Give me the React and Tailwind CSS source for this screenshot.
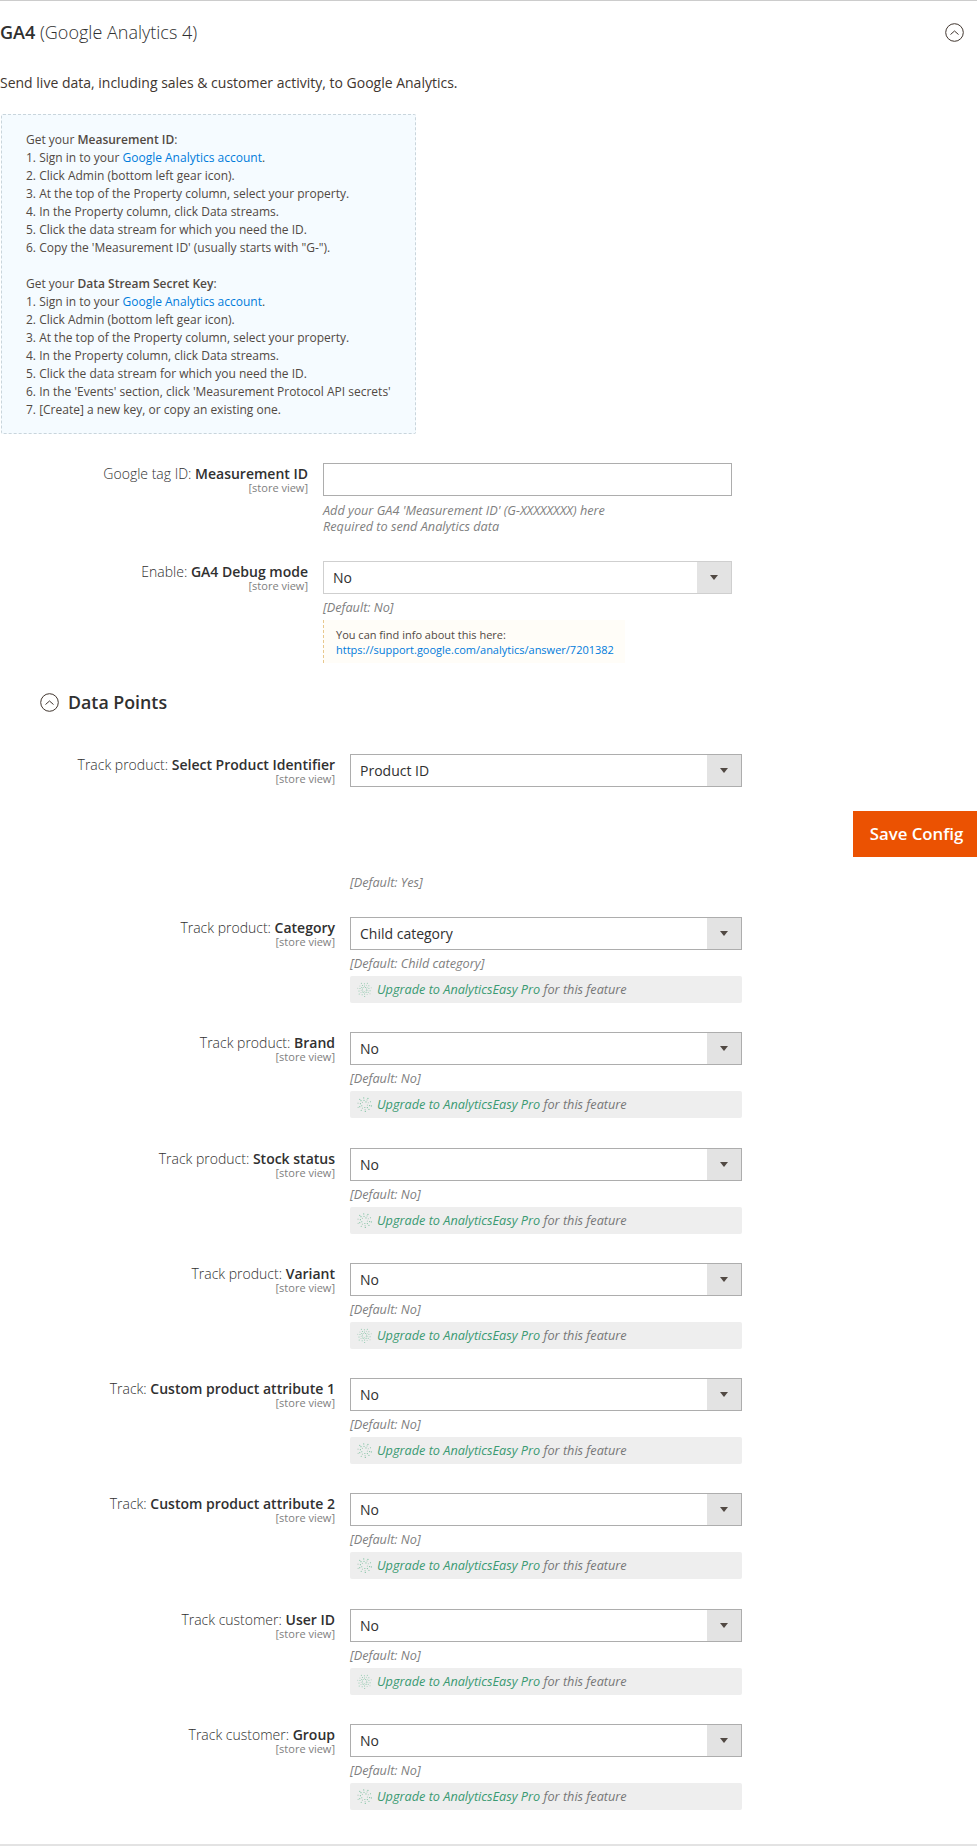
function Burst({ dense }) {
  const n = dense ? 14 : 10;
  const dots = [];
  for (let i = 0; i < n; i++) {
    const a = (i / n) * Math.PI * 2 + 0.2;
    const radii = dense ? (i % 2 ? [2.2, 4.6, 6.9] : [3.4, 5.7]) : i % 2 ? [4.2, 6.6] : [3, 5.2, 7];
    radii.forEach((r, j) => {
      dots.push(
        <circle key={`${i}-${j}`} cx={7.5 + Math.cos(a) * r} cy={7.5 + Math.sin(a) * r} r={dense ? 0.5 : 0.6} fill={(i + j) % 3 ? "#7cc2a1" : "#b0cbbd"} />
      );
    });
  }
  return <svg width="15" height="15" viewBox="0 0 15 15" className="shrink-0">{dots}</svg>;
}

function Chevron() {
  return (
    <svg width="19" height="19" viewBox="0 0 19 19" fill="none" className="shrink-0">
      <circle cx="9.5" cy="9.5" r="8.8" stroke="#41362f" strokeWidth="1" />
      <path d="M5.5 11.5 L9.5 8 L13.5 11.5" stroke="#41362f" strokeWidth="1" />
    </svg>
  );
}

function Select({ value, w = "w-[392px]", border = "border-[#adadad]" }) {
  return (
    <div className={`flex h-[33px] ${w} border ${border} bg-white`}>
      <div className="flex-1 pl-[9px] text-[14px] leading-[31px] text-[#303030]">{value}</div>
      <div className="flex w-[34px] items-center justify-center bg-[#e3e3e3]">
        <div className="h-0 w-0 border-x-[4px] border-t-[5px] border-x-transparent border-t-[#514943]" />
      </div>
    </div>
  );
}

function Label({ pre, bold, w }) {
  return (
    <div className={`${w} shrink-0 pr-[15px] text-right`}>
      <div className="mt-[1px] text-[14px] leading-[19px] text-[#303030]">
        <span className="font-light">{pre} </span>
        <span className="font-semibold">{bold}</span>
      </div>
      <div className="mt-[-2px] text-[11px] leading-[13px] text-[#808080]">[store view]</div>
    </div>
  );
}

function Default({ children }) {
  return <div className="mt-[5px] text-[12.7px] italic leading-[16px] text-[#808080]">{children}</div>;
}

function TrackRow({ pre, bold, value, dense }) {
  return (
    <div className="mb-[29.3px] flex">
      <Label pre={pre} bold={bold} w="w-[350px]" />
      <div className="w-[392px]">
        <Select value={value} />
        <Default>[Default: {value}]</Default>
        <div className="mt-[5px] flex h-[27px] items-center gap-[5px] rounded-[2px] bg-[#eeeeee] pl-[7px] text-[12.7px] italic text-[#777777]">
          <Burst dense={dense} />
          <div>
            <span className="text-[#3a9a72]">Upgrade to AnalyticsEasy Pro</span> for this feature
          </div>
        </div>
      </div>
    </div>
  );
}

const steps1 = [
  "2. Click Admin (bottom left gear icon).",
  "3. At the top of the Property column, select your property.",
  "4. In the Property column, click Data streams.",
  "5. Click the data stream for which you need the ID.",
];

function Instructions({ title, tail }) {
  return (
    <div>
      <div>Get your <b className="font-semibold">{title}</b>:</div>
      <div>1. Sign in to your <span className="text-[#007bdb]">Google Analytics account</span>.</div>
      {steps1.map((s) => <div key={s}>{s}</div>)}
      {tail.map((s) => <div key={s}>{s}</div>)}
    </div>
  );
}

const rows = [
  ["Track product:", "Category", "Child category", true],
  ["Track product:", "Brand", "No", false],
  ["Track product:", "Stock status", "No", false],
  ["Track product:", "Variant", "No", true],
  ["Track:", "Custom product attribute 1", "No", false],
  ["Track:", "Custom product attribute 2", "No", false],
  ["Track customer:", "User ID", "No", true],
  ["Track customer:", "Group", "No", false],
];

export default function App() {
  return (
    <div className="relative h-[1846px] w-[977px] overflow-hidden bg-white font-['Open_Sans',sans-serif] text-[#303030]">
      <div className="h-[1px] bg-[#cccccc]" />
      <div className="flex h-[62px] items-center justify-between pr-[13px]">
        <div className="text-[18px]">
          <span className="font-semibold">GA4</span> <span className="font-light">(Google Analytics 4)</span>
        </div>
        <Chevron />
      </div>
      <div className="mt-[10px] text-[14px] leading-[20px] text-[#41362f]">
        Send live data, including sales &amp; customer activity, to Google Analytics.
      </div>
      <div className="ml-[1px] mt-[21px] h-[320px] w-[415px] rounded-[2px] border border-dashed border-[#c9d5dc] bg-[#f5fbff] pl-[24px] pt-[16px] text-[12px] leading-[18px] text-[#514943]">
        <Instructions title="Measurement ID" tail={[`6. Copy the 'Measurement ID' (usually starts with "G-").`]} />
        <div className="h-[18px]" />
        <Instructions title="Data Stream Secret Key" tail={["6. In the 'Events' section, click 'Measurement Protocol API secrets'", "7. [Create] a new key, or copy an existing one."]} />
      </div>

      <div className="mt-[29px] flex">
        <Label pre="Google tag ID:" bold="Measurement ID" w="w-[323px]" />
        <div className="w-[409px]">
          <div className="h-[33px] border border-[#adadad] bg-white" />
          <div className="mt-[6px] text-[12.7px] italic leading-[16px] text-[#808080]">
            <div>Add your GA4 'Measurement ID' (G-XXXXXXXX) here</div>
            <div>Required to send Analytics data</div>
          </div>
        </div>
      </div>

      <div className="mt-[27px] flex">
        <Label pre="Enable:" bold="GA4 Debug mode" w="w-[323px]" />
        <div className="w-[409px]">
          <Select value="No" w="w-[409px]" border="border-[#cfcfcf]" />
          <Default>[Default: No]</Default>
          <div className="mt-[5px] h-[43px] w-[302px] border-l border-dashed border-[#e8c88e] bg-[#fffdf8] pl-[12px] pt-[7px] text-[11px] leading-[15px] text-[#514943]">
            <div>You can find info about this here:</div>
            <div className="text-[#007bdb]">https://support.google.com/analytics/answer/7201382</div>
          </div>
        </div>
      </div>

      <div className="ml-[40px] mt-[26px] flex h-[26px] items-center gap-[9px]">
        <Chevron />
        <div className="text-[17.8px] font-semibold">Data Points</div>
      </div>

      <div className="mt-[39px] flex">
        <Label pre="Track product:" bold="Select Product Identifier" w="w-[350px]" />
        <Select value="Product ID" />
      </div>
      <div className="ml-[350px] mt-[87px] text-[12.7px] italic leading-[16px] text-[#808080]">[Default: Yes]</div>

      <div className="mt-[27px]">
        {rows.map(([pre, bold, value, dense]) => (
          <TrackRow key={bold} pre={pre} bold={bold} value={value} dense={dense} />
        ))}
      </div>

      <div className="absolute right-0 top-[811px] flex h-[46px] w-[124px] items-center justify-center bg-[#eb5202] pl-[3px] text-[16.8px] font-semibold text-white">
        Save Config
      </div>
      <div className="absolute bottom-0 left-0 h-[2px] w-full bg-[#e3e3e3]" />
    </div>
  );
}
